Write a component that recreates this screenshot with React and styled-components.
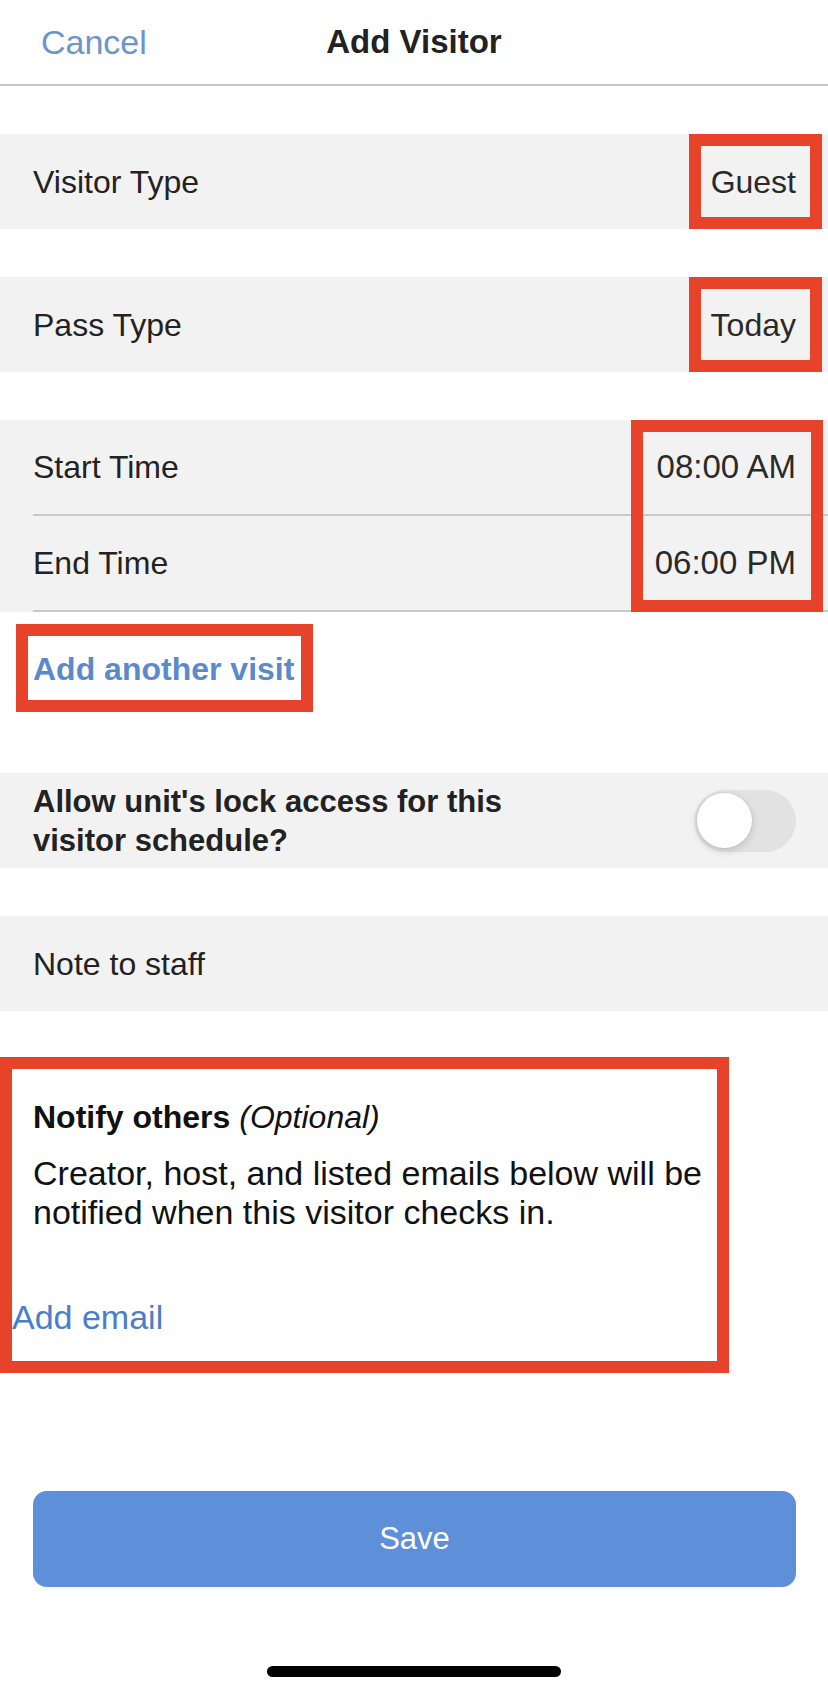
import styled, { createGlobalStyle, css } from "styled-components";

const GlobalStyle = createGlobalStyle`
  *,
  *::before,
  *::after {
    box-sizing: border-box;
  }
  body {
    margin: 0;
    background: #fff;
    font-family: "Liberation Sans", Arial, sans-serif;
    color: #222;
  }
`;

const RED = "#e6432a";

const redBox = css`
  &::after {
    content: "";
    position: absolute;
    border: 12px solid ${RED};
    pointer-events: none;
  }
`;

const Page = styled.div`
  width: 828px;
  min-height: 1692px;
  display: flex;
  flex-direction: column;
  background: #fff;
`;

const Header = styled.header`
  height: 86px;
  display: grid;
  grid-template-columns: 1fr auto 1fr;
  align-items: center;
  border-bottom: 2px solid #c8c8c8;
`;

const Cancel = styled.span`
  padding-left: 41px;
  font-size: 34px;
  color: #6b96cc;
`;

const Title = styled.h1`
  margin: 0;
  font-size: 33px;
  font-weight: 700;
  color: #222;
`;

const Form = styled.div`
  display: flex;
  flex-direction: column;
  gap: 48px;
  padding-top: 48px;
`;

const Row = styled.div`
  height: 95px;
  display: flex;
  align-items: center;
  justify-content: space-between;
  padding: 0 32px 0 33px;
  background: #f2f2f2;
`;

const Label = styled.span`
  font-size: 32px;
  line-height: 40px;
  color: #222;
`;

const Value = styled.span`
  position: relative;
  font-size: ${(p) => p.$size || 32}px;
  line-height: 40px;
  color: #2a2a2a;
  ${(p) =>
    p.$marked &&
    css`
      ${redBox}
      &::after {
        top: -28px;
        bottom: -27px;
        left: -22px;
        right: -26px;
      }
    `}
`;

const TimeGroup = styled.div`
  position: relative;
  padding-left: 33px;
  background: #f2f2f2;
  ${redBox}
  &::after {
    top: 0;
    bottom: 0;
    right: 5px;
    width: 192px;
  }
`;

const TimeRow = styled.div`
  height: 96px;
  display: flex;
  align-items: center;
  justify-content: space-between;
  padding-right: 32px;
  border-bottom: 2px solid #c9c9c9;
`;

const Section = styled.div`
  display: flex;
  flex-direction: column;
`;

const AddVisit = styled.span`
  position: relative;
  align-self: flex-start;
  margin: 37px 0 36px 33px;
  font-size: 32px;
  line-height: 40px;
  font-weight: 700;
  color: #5b8acb;
  ${redBox}
  &::after {
    top: -25px;
    bottom: -23px;
    left: -17px;
    right: -19px;
  }
`;

const ToggleLabel = styled.span`
  max-width: 540px;
  font-size: 31px;
  line-height: 39px;
  font-weight: 700;
  color: #222;
`;

const Switch = styled.div`
  width: 102px;
  height: 62px;
  flex-shrink: 0;
  display: flex;
  align-items: center;
  padding-left: 3px;
  border-radius: 31px;
  background: #e2e2e2;
`;

const Knob = styled.div`
  width: 55px;
  height: 55px;
  border-radius: 50%;
  background: #fff;
  box-shadow: 0 3px 8px rgba(0, 0, 0, 0.15), 0 0 0 1px rgba(0, 0, 0, 0.04);
`;

const NotifyBox = styled.div`
  width: 729px;
  margin-top: -2px;
  padding: 28px 0 24px;
  border: 12px solid ${RED};
  display: flex;
  flex-direction: column;
`;

const NotifyTitle = styled.div`
  padding-left: 21px;
  font-size: 32px;
  line-height: 40px;
  font-weight: 700;
  color: #111;

  em {
    font-weight: 400;
  }
`;

const NotifyText = styled.p`
  margin: 17px 0 0;
  padding: 0 8px 0 21px;
  font-size: 34px;
  line-height: 39px;
  color: #111;
`;

const AddEmail = styled.span`
  margin-top: 65px;
  font-size: 34px;
  line-height: 40px;
  color: #4a7ec8;
`;

const SaveButton = styled.button`
  height: 96px;
  margin: 118px 32px 0 33px;
  border: none;
  border-radius: 14px;
  background: #5e8fd9;
  color: #fff;
  font-family: inherit;
  font-size: 31px;
  cursor: pointer;
`;

const HomeBar = styled.div`
  width: 294px;
  height: 11px;
  margin: 79px auto 0;
  border-radius: 6px;
  background: #000;
`;

const App = () => {
  return (
    <Page>
      <GlobalStyle />
      <Header>
        <Cancel>Cancel</Cancel>
        <Title>Add Visitor</Title>
        <span />
      </Header>
      <Form>
        <Row>
          <Label>Visitor Type</Label>
          <Value $marked>Guest</Value>
        </Row>
        <Row>
          <Label>Pass Type</Label>
          <Value $marked>Today</Value>
        </Row>
        <Section>
          <TimeGroup>
            <TimeRow>
              <Label>Start Time</Label>
              <Value $size={33}>08:00 AM</Value>
            </TimeRow>
            <TimeRow>
              <Label>End Time</Label>
              <Value $size={33}>06:00 PM</Value>
            </TimeRow>
          </TimeGroup>
          <AddVisit>Add another visit</AddVisit>
        </Section>
        <Row>
          <ToggleLabel>Allow unit's lock access for this visitor schedule?</ToggleLabel>
          <Switch>
            <Knob />
          </Switch>
        </Row>
        <Row>
          <Label>Note to staff</Label>
        </Row>
        <NotifyBox>
          <NotifyTitle>
            Notify others <em>(Optional)</em>
          </NotifyTitle>
          <NotifyText>
            Creator, host, and listed emails below will be notified when this visitor checks in.
          </NotifyText>
          <AddEmail>Add email</AddEmail>
        </NotifyBox>
      </Form>
      <SaveButton>Save</SaveButton>
      <HomeBar />
    </Page>
  );
};

export default App;
